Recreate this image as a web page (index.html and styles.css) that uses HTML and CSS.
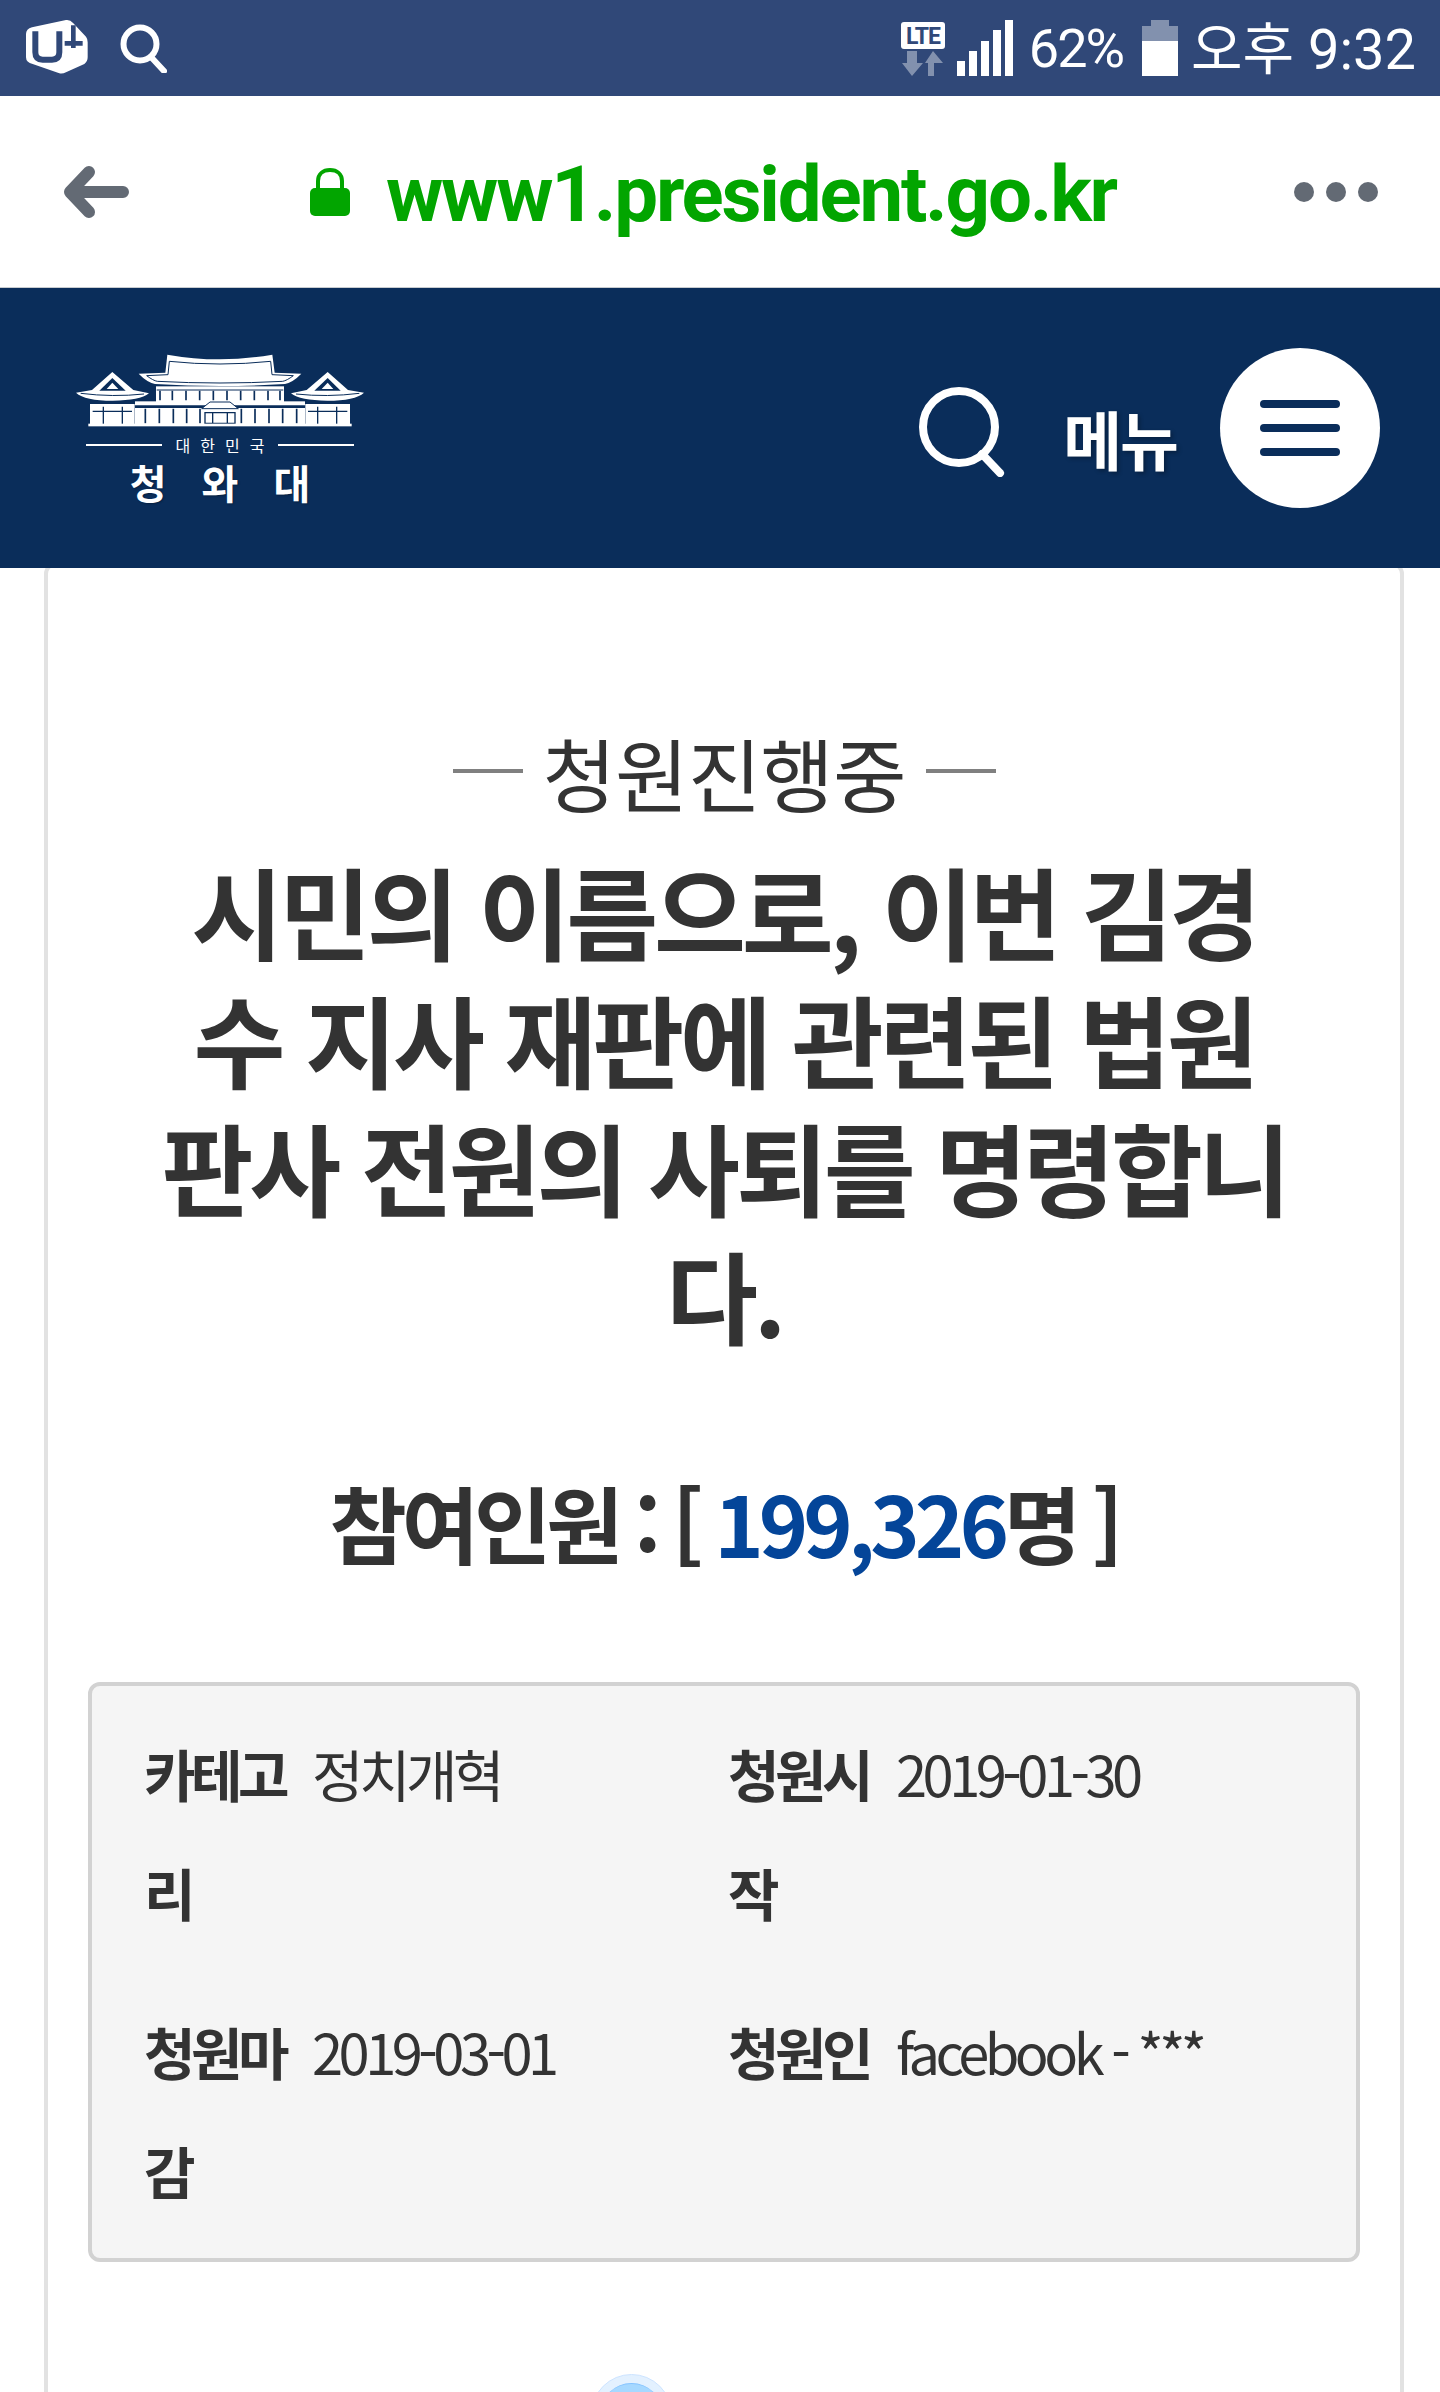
FILE: index.html
```html
<!DOCTYPE html>
<html lang="ko">
<head>
  <meta charset="UTF-8">
  <meta name="viewport" content="width=device-width, initial-scale=1.0">
  <title>청원진행중 - 청와대</title>
  <link rel="stylesheet" href="styles.css">
</head>
<body>
  <div class="status-bar">
    <div class="status-left">
      <svg class="carrier-icon" viewBox="0 0 240 198">
        <path fill="#fff" d="M30 60Q30 45 48 40L150 18Q162 16 172 28L210 68Q215 74 215 85V130Q215 142 205 150L150 175Q140 180 130 178L50 150Q30 145 30 130Z"/>
        <path fill="none" stroke="#304878" stroke-width="18" d="M58 52V115Q58 137 80 137H108Q130 137 130 115V52"/>
        <path fill="none" stroke="#304878" stroke-width="14" d="M146 88H200M172 34V102"/>
      </svg>
      <svg class="status-search" viewBox="0 0 48 50">
        <circle cx="21" cy="21" r="16.5" fill="none" stroke="#fff" stroke-width="6"/>
        <path d="M32 34L45 48" stroke="#fff" stroke-width="6" stroke-linecap="round"/>
      </svg>
    </div>
    <div class="status-right">
      <svg class="lte-icon" viewBox="0 0 44 54">
        <rect width="44" height="27" rx="3" fill="#fff"/>
        <text x="22" y="22" text-anchor="middle" class="lte-text">LTE</text>
        <path fill="#fff" opacity="0.4" d="M6 29H16V41H22L11 54L1 41H6ZM24 41L32 29L42 41H33V54H27V41Z"/>
      </svg>
      <svg class="signal-icon" viewBox="0 0 56 56">
        <rect x="0" y="41" width="8" height="15"/>
        <rect x="12" y="31" width="8" height="25"/>
        <rect x="24" y="21" width="8" height="35"/>
        <rect x="36" y="10" width="8" height="46"/>
        <rect x="48" y="0" width="8" height="56"/>
      </svg>
      <span class="battery-text">62%</span>
      <svg class="battery-icon" viewBox="0 0 36 56">
        <path fill="#fff" opacity="0.4" d="M9 0H27V6H36V21H0V6H9Z"/>
        <rect y="21" width="36" height="35" fill="#fff"/>
      </svg>
      <span class="clock">오후 9:32</span>
    </div>
  </div>

  <div class="toolbar">
    <svg class="back-icon" viewBox="0 0 66 52">
      <path d="M60 26H8M26 6L7 26L26 46" fill="none" stroke="#636a74" stroke-width="12" stroke-linecap="round" stroke-linejoin="round"/>
    </svg>
    <div class="address">
      <svg class="lock-icon" viewBox="0 0 40 48">
        <path d="M8 22V13C8 6 13 2 20 2S32 6 32 13V22" fill="none" stroke="#02a500" stroke-width="4"/>
        <rect y="20" width="40" height="28" rx="5" fill="#02a500"/>
      </svg>
      <span class="url">www1.president.go.kr</span>
    </div>
    <div class="more-dots"><i></i><i></i><i></i></div>
  </div>

  <header class="site-header">
    <div class="logo">
      <svg class="logo-building" viewBox="108 65 864 225">
        <g id="pavilion">
          <path d="M217 122L280 176L327 186Q300 208 218 208Q135 208 108 184L156 176Z" fill="#fff"/>
          <path d="M217 140L178 178H257Z" fill="#0a2d5a"/>
          <path d="M217 154L200 173H235Z" fill="#fff"/>
          <path d="M122 186Q218 198 312 188" fill="none" stroke="#0a2d5a" stroke-width="3"/>
          <rect x="150" y="218" width="134" height="62" fill="#fff"/>
          <path d="M190 226V278M247 226V278M158 240H276" stroke="#0a2d5a" stroke-width="4"/>
        </g>
        <use href="#pavilion" transform="translate(1080 0) scale(-1 1)"/>
        <path d="M382 70Q540 98 697 70L704 124L784 127Q760 152 735 158Q540 170 345 158Q320 152 296 127L376 124Z" fill="#fff"/>
        <path d="M388 90Q540 106 692 90L696 130L760 133Q740 148 728 150Q540 160 352 150Q340 148 320 133L384 130Z" fill="none" stroke="#0a2d5a" stroke-width="3"/>
        <rect x="348" y="165" width="384" height="47" fill="#fff"/>
        <path d="M350 176H730" stroke="#0a2d5a" stroke-width="3"/>
        <path d="M360 178V207M397 178V207M438 178V207M479 178V207M520 178V207M561 178V207M602 178V207M643 178V207M684 178V207M720 178V207" stroke="#0a2d5a" stroke-width="5"/>
        <rect x="285" y="210" width="510" height="68" fill="#fff"/>
        <path d="M285 226H795" stroke="#0a2d5a" stroke-width="8"/>
        <path d="M316 232V276M358 232V276M400 232V276M440 232V276M480 232V276M604 232V276M645 232V276M687 232V276M728 232V276M770 232V276" stroke="#0a2d5a" stroke-width="5"/>
        <path d="M485 232L510 212H570L595 232Z" fill="#fff" stroke="#0a2d5a" stroke-width="3"/>
        <path d="M495 244H585V276H495ZM518 244V276M562 244V276" fill="#fff" stroke="#0a2d5a" stroke-width="4"/>
        <rect x="145" y="277" width="790" height="8" fill="#fff"/>
      </svg>
      <div class="logo-country"><i></i><span>대한민국</span><i></i></div>
      <div class="logo-name">청와대</div>
    </div>
    <div class="header-actions">
      <svg class="header-search" viewBox="0 0 90 90">
        <circle cx="40" cy="40" r="36" fill="none" stroke="#fff" stroke-width="8"/>
        <path d="M63 67L81 86" stroke="#fff" stroke-width="8" stroke-linecap="round"/>
      </svg>
      <span class="menu-label">메뉴</span>
      <button class="menu-button"><i></i><i></i><i></i></button>
    </div>
  </header>

  <main class="petition-card">
    <div class="petition-state"><i></i><span>청원진행중</span><i></i></div>
    <h1 class="petition-title">시민의 이름으로, 이번 김경수 지사 재판에 관련된 법원 판사 전원의 사퇴를 명령합니다.</h1>
    <h2 class="petition-count">참여인원 : [ <span>199,326</span>명 ]</h2>

    <ul class="petition-info">
      <li><strong>카테고리</strong><span>정치개혁</span></li>
      <li><strong>청원시작</strong><span>2019-01-30</span></li>
      <li><strong>청원마감</strong><span>2019-03-01</span></li>
      <li><strong>청원인</strong><span>facebook - ***</span></li>
    </ul>

    <div class="progress-dot"><div></div></div>
  </main>
</body>
</html>
```

FILE: styles.css
```css
* {
  margin: 0;
  padding: 0;
  box-sizing: border-box;
}

html, body {
  width: 1440px;
  height: 2392px;
  overflow: hidden;
}

body {
  font-family: "Noto Sans CJK KR", "Noto Sans", sans-serif;
  background: #fff;
  color: #333;
}

/* phone status bar */
.status-bar {
  height: 96px;
  background: #304878;
  display: flex;
  justify-content: space-between;
  align-items: flex-start;
  color: #fff;
}

.status-left {
  display: flex;
  align-items: flex-start;
  padding: 14px 0 0 16px;
}

.carrier-icon {
  width: 80px;
  height: 66px;
}

.status-search {
  width: 48px;
  height: 50px;
  margin: 9px 0 0 23px;
}

.status-right {
  display: flex;
  align-items: flex-start;
  padding: 20px 24px 0 0;
}

.lte-icon {
  width: 44px;
  height: 54px;
  margin-top: 2px;
}

.lte-text {
  font-family: Roboto, sans-serif;
  font-size: 23px;
  font-weight: 700;
  fill: #304878;
  letter-spacing: -1px;
}

.signal-icon {
  width: 56px;
  height: 56px;
  margin-left: 12px;
  fill: #fff;
}

.battery-text {
  font-family: Roboto, sans-serif;
  font-size: 54px;
  line-height: 56px;
  letter-spacing: -2px;
  margin: 1px 0 0 16px;
}

.battery-icon {
  width: 36px;
  height: 56px;
  margin-left: 19px;
}

.clock {
  font-family: Roboto, "Noto Sans CJK KR", sans-serif;
  font-size: 56px;
  line-height: 56px;
  margin: 2px 0 0 13px;
  white-space: nowrap;
}

/* browser toolbar */
.toolbar {
  height: 192px;
  border-bottom: 1px solid #c8ccd0;
  display: flex;
  align-items: center;
  padding: 0 62px 0 63px;
}

.back-icon {
  width: 66px;
  height: 52px;
}

.address {
  flex: 1;
  display: flex;
  align-items: center;
  padding-left: 181px;
}

.lock-icon {
  width: 40px;
  height: 48px;
}

.url {
  font-family: Roboto, sans-serif;
  font-size: 78px;
  font-weight: 700;
  line-height: 90px;
  color: #02a500;
  margin: 6px 0 0 36px;
  letter-spacing: -2.2px;
}

.more-dots {
  display: flex;
  gap: 12px;
}

.more-dots i {
  width: 20px;
  height: 20px;
  border-radius: 50%;
  background: #636a74;
}

/* site header */
.site-header {
  position: relative;
  z-index: 1;
  height: 280px;
  background: #0a2d5a;
  display: flex;
  justify-content: space-between;
  align-items: center;
  padding: 0 60px 0 76px;
}

.logo {
  width: 288px;
  color: #fff;
  display: flex;
  flex-direction: column;
  align-items: center;
}

.logo-building {
  width: 288px;
  height: 75px;
  display: block;
}

.logo-country {
  width: 268px;
  display: flex;
  align-items: center;
  justify-content: space-between;
  margin-top: 6px;
  height: 22px;
  font-size: 16px;
  line-height: 22px;
}

.logo-country i {
  width: 76px;
  height: 2px;
  background: #fff;
}

.logo-country span {
  letter-spacing: 10px;
  margin-right: -10px;
}

.logo-name {
  font-size: 40px;
  font-weight: 700;
  line-height: 44px;
  letter-spacing: 35px;
  margin-right: -35px;
  margin-top: 4px;
  text-shadow: 1px 1px 2px rgba(0, 0, 0, 0.3);
}

.header-actions {
  display: flex;
  align-items: center;
}

.header-search {
  width: 90px;
  height: 90px;
  margin-top: 8px;
}

.menu-label {
  font-size: 64px;
  font-weight: 700;
  line-height: 80px;
  color: #fff;
  letter-spacing: -2px;
  margin: 18px 0 0 54px;
  text-shadow: 2px 2px 4px rgba(0, 0, 0, 0.3);
}

.menu-button {
  width: 160px;
  height: 160px;
  border: none;
  border-radius: 50%;
  background: #fff;
  margin-left: 43px;
  display: flex;
  flex-direction: column;
  align-items: center;
  justify-content: center;
  gap: 16px;
}

.menu-button i {
  width: 80px;
  height: 8px;
  border-radius: 4px;
  background: #0a2d5a;
}

/* petition */
.petition-card {
  width: 1360px;
  height: 1900px;
  margin: -6px 0 0 44px;
  padding: 155px 40px 0;
  border: 4px solid #e2e2e2;
  border-radius: 12px;
}

.petition-state {
  display: flex;
  justify-content: center;
  align-items: center;
  gap: 20px;
  height: 100px;
  font-size: 80px;
  line-height: 100px;
  letter-spacing: -1px;
}

.petition-state i {
  width: 70px;
  height: 4px;
  background: #808080;
}

.petition-title {
  margin-top: 25px;
  font-size: 100px;
  font-weight: 700;
  line-height: 128px;
  letter-spacing: -4.2px;
  text-align: center;
  padding: 0 68px;
}

.petition-count {
  margin-top: 114px;
  font-size: 84px;
  font-weight: 700;
  line-height: 100px;
  letter-spacing: -5px;
  word-spacing: -3px;
  text-align: center;
}

.petition-count span {
  color: #044599;
}

.petition-info {
  list-style: none;
  margin-top: 110px;
  height: 580px;
  padding: 27px 52px;
  background: #f5f5f5;
  border: 4px solid #d2d2d2;
  border-radius: 12px;
  display: grid;
  grid-template-columns: 584px 1fr;
  row-gap: 40px;
  align-content: start;
  font-size: 56px;
  line-height: 119px;
  letter-spacing: -4.5px;
}

.petition-info li {
  display: flex;
  height: 238px;
}

.petition-info strong {
  flex: none;
  width: 168px;
  font-weight: 700;
}

.progress-dot {
  width: 81px;
  height: 81px;
  margin: 112px 0 0 503px;
  padding: 8px;
  border-radius: 50%;
  background: #e3f1ff;
  border: 1px solid #cde4ff;
}

.progress-dot div {
  width: 63px;
  height: 63px;
  border-radius: 50%;
  background: #a6d8ff;
  border-top: 1px solid #85c4ff;
}
```
